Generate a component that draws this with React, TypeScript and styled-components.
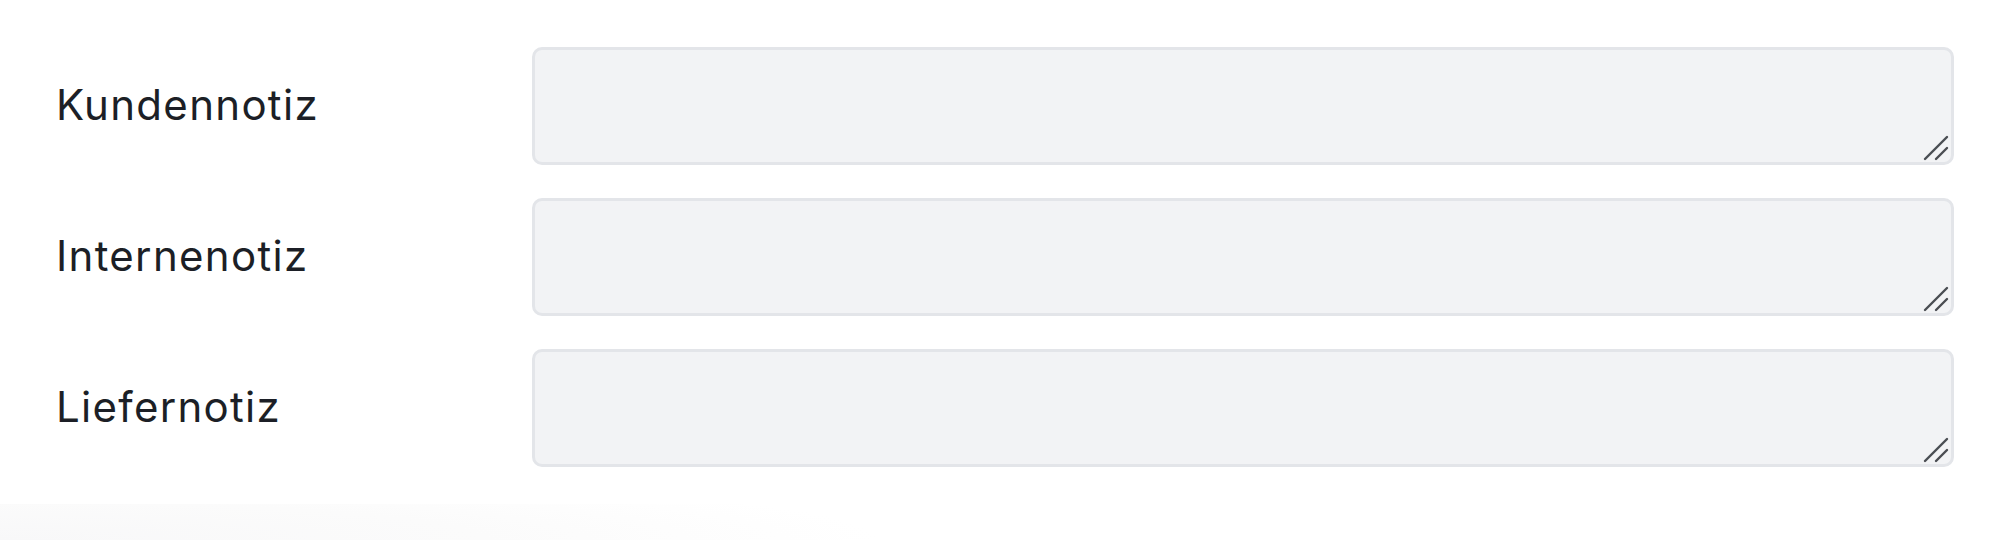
import * as React from 'react'
import styled, { createGlobalStyle } from 'styled-components'

const GlobalStyle = createGlobalStyle`
  html, body {
    margin: 0;
    padding: 0;
    background: #fff;
  }

  body {
    font-family: Inter, 'Noto Sans', 'Liberation Sans', sans-serif;
    color: #1c1f26;
  }
`

const Page = styled.div`
  width: 2000px;
  height: 540px;
  display: flex;
  flex-direction: column;
  overflow: hidden;
`

const Form = styled.form`
  display: flex;
  flex-direction: column;
  gap: 33px;
  padding: 47px 46px 0 56px;
`

const Row = styled.div`
  display: grid;
  grid-template-columns: 476px 1fr;
  align-items: center;
`

const Label = styled.label`
  font-size: 42px;
  font-weight: 400;
  letter-spacing: 1.3px;
  line-height: 1;
  color: #1c1f26;
  padding-bottom: 2px;
`

const FieldWrap = styled.div`
  position: relative;
  height: 118px;
`

const Area = styled.textarea`
  box-sizing: border-box;
  display: block;
  width: 100%;
  height: 100%;
  margin: 0;
  padding: 14px 18px;
  background: #f2f3f5;
  border: 3px solid #e3e5e9;
  border-radius: 10px;
  resize: none;
  font: inherit;
  font-size: 32px;
  color: #1c1f26;
  outline: none;
`

const Grip = styled.svg`
  position: absolute;
  right: 5px;
  bottom: 4px;
  width: 26px;
  height: 26px;
  pointer-events: none;
`

const BottomShade = styled.div`
  margin-top: auto;
  height: 36px;
  background: radial-gradient(
    ellipse 880px 70px at 0% 100%,
    #f8f8f9 0%,
    #fbfbfb 55%,
    rgba(255, 255, 255, 0) 100%
  );
`

const ResizeGrip = () => (
  <Grip viewBox="0 0 26 26">
    <line x1="2" y1="24" x2="24" y2="2" stroke="#4a4d52" strokeWidth="2.4" strokeLinecap="round" />
    <line x1="13" y1="24" x2="24" y2="13" stroke="#4a4d52" strokeWidth="2.4" strokeLinecap="round" />
  </Grip>
)

const notes = [
  { id: 'kundennotiz', label: 'Kundennotiz' },
  { id: 'internenotiz', label: 'Internenotiz' },
  { id: 'liefernotiz', label: 'Liefernotiz' },
]

const App: React.FunctionComponent = () => (
  <Page>
    <GlobalStyle />
    <Form onSubmit={e => e.preventDefault()}>
      {notes.map(note => (
        <Row key={note.id}>
          <Label htmlFor={note.id}>{note.label}</Label>
          <FieldWrap>
            <Area id={note.id} name={note.id} />
            <ResizeGrip />
          </FieldWrap>
        </Row>
      ))}
    </Form>
    <BottomShade />
  </Page>
)

export default App
